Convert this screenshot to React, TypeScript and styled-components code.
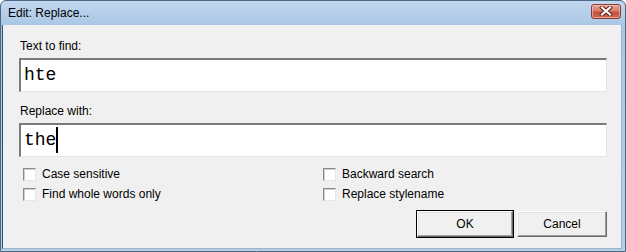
import styled, { createGlobalStyle } from 'styled-components';

const GlobalStyle = createGlobalStyle`
  html, body {
    margin: 0;
    padding: 0;
    background: #ffffff;
  }
  body {
    font-family: "Liberation Sans", Arial, sans-serif;
    font-size: 12px;
  }
`

const Window = styled.div`
  box-sizing: border-box;
  width: 626px;
  height: 252px;
  display: flex;
  flex-direction: column;
  padding: 0 3px 2px 1px;
  border: 1px solid #4a6784;
  border-radius: 6px 6px 0 0;
  background: linear-gradient(to bottom, #c2d7ee 0px, #aac7e6 24px, #b4d0e8 100%);
  overflow: hidden;
`

const TitleBar = styled.div`
  height: 24px;
  flex: none;
  display: flex;
  align-items: center;
  justify-content: space-between;
  padding: 0 1px 0 6px;
`

const Title = styled.span`
  color: #000;
  font-size: 12px;
  line-height: 15px;
`

const CloseButton = styled.div`
  box-sizing: border-box;
  width: 30px;
  height: 15px;
  margin-top: -4px;
  display: flex;
  align-items: center;
  justify-content: center;
  border: 1px solid #8a3a2e;
  border-radius: 3px;
  background: linear-gradient(to bottom, #e7a393 0%, #d67e6a 45%, #c4513c 55%, #cd6a52 100%);
  box-shadow: inset 0 0 0 1px rgba(255, 210, 200, 0.55);
`

const Client = styled.div`
  flex: 1;
  display: flex;
  flex-direction: column;
  padding: 14px 14px 0 16px;
  background: #f0f0f0;
  border-left: 1px solid #34506c;
  border-right: 1px solid #9fb4c9;
  border-bottom: 1px solid #9fb4c9;
`

const Label = styled.div<{ $gap?: number }>`
  color: #000;
  font-size: 12px;
  line-height: 15px;
  margin-top: ${p => p.$gap ?? 0}px;
  margin-bottom: 4px;
  padding-left: 1px;
`

const TextBox = styled.div`
  box-sizing: border-box;
  height: 34px;
  display: flex;
  align-items: center;
  padding: 0 0 1px 3px;
  background: #fff;
  border-top: 2px solid #7a7a7a;
  border-left: 2px solid #7a7a7a;
  border-right: 1px solid #e3e3e3;
  border-bottom: 1px solid #e3e3e3;
  font-family: "Liberation Mono", "Courier New", monospace;
  font-size: 18px;
  color: #000;
`

const Caret = styled.span`
  display: inline-block;
  width: 2px;
  height: 26px;
  background: #000;
`

const Options = styled.div`
  display: grid;
  grid-template-columns: 300px auto;
  grid-auto-rows: 20px;
  margin-top: 7px;
  padding-left: 4px;
`

const Option = styled.label`
  display: flex;
  align-items: center;
  gap: 6px;
  color: #000;
  font-size: 12px;
`

const Box = styled.span`
  box-sizing: border-box;
  width: 13px;
  height: 13px;
  background: #fff;
  border-top: 1px solid #8a8a8a;
  border-left: 1px solid #8a8a8a;
  border-right: 1px solid #e6e6e6;
  border-bottom: 1px solid #e6e6e6;
  box-shadow: inset 1px 1px 0 #d0d0d0;
`

const ButtonRow = styled.div`
  display: flex;
  justify-content: flex-end;
  gap: 4px;
  margin-top: 7px;
`

const Button = styled.div<{ $width: number; $default?: boolean }>`
  box-sizing: border-box;
  width: ${p => p.$width}px;
  height: 26px;
  display: flex;
  align-items: center;
  justify-content: center;
  background: #f0f0f0;
  color: #000;
  font-size: 12px;
  border-top: 1px solid #ffffff;
  border-left: 1px solid #ffffff;
  border-right: 1px solid #696969;
  border-bottom: 1px solid #696969;
  box-shadow: inset -1px -1px 0 #a0a0a0, inset 1px 1px 0 #e3e3e3${p => (p.$default ? ', 0 0 0 1px #000' : '')};
`

export default function App() {
  return (
    <>
      <GlobalStyle />
      <Window>
        <TitleBar>
          <Title>Edit: Replace...</Title>
          <CloseButton>
            <svg width="14" height="10" viewBox="0 0 14 10">
              <path d="M3 1.5 L11 8.5 M11 1.5 L3 8.5" stroke="#5a1c14" strokeWidth="4" strokeLinecap="square" />
              <path d="M3 1.5 L11 8.5 M11 1.5 L3 8.5" stroke="#ffffff" strokeWidth="2.2" strokeLinecap="square" />
            </svg>
          </CloseButton>
        </TitleBar>
        <Client>
          <Label>Text to find:</Label>
          <TextBox>hte</TextBox>
          <Label $gap={12}>Replace with:</Label>
          <TextBox>the<Caret /></TextBox>
          <Options>
            <Option><Box />Case sensitive</Option>
            <Option><Box />Backward search</Option>
            <Option><Box />Find whole words only</Option>
            <Option><Box />Replace stylename</Option>
          </Options>
          <ButtonRow>
            <Button $width={96} $default>OK</Button>
            <Button $width={90}>Cancel</Button>
          </ButtonRow>
        </Client>
      </Window>
    </>
  );
}
